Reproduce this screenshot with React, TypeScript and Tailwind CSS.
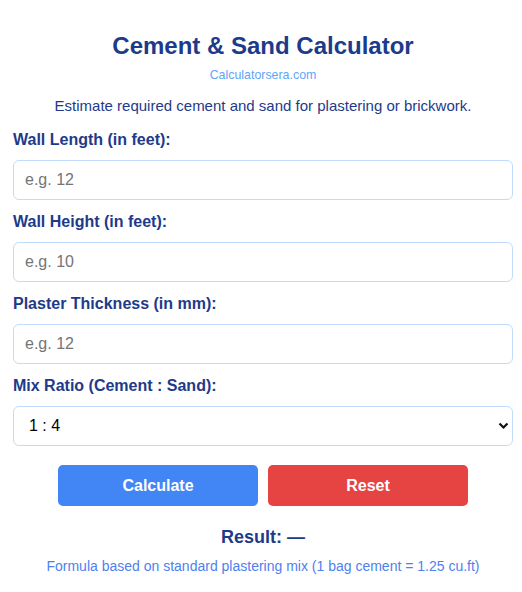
import { useState } from 'react';

const fields = [
  { label: 'Wall Length (in feet):', placeholder: 'e.g. 12' },
  { label: 'Wall Height (in feet):', placeholder: 'e.g. 10' },
  { label: 'Plaster Thickness (in mm):', placeholder: 'e.g. 12' },
];

export default function App() {
  const [values, setValues] = useState(['', '', '']);
  const [ratio, setRatio] = useState('4');

  return (
    <div className="min-h-screen bg-white font-['Liberation_Sans',Arial,sans-serif]">
      <div className="pl-[13px] pr-[9px] pt-[32px]">
        {/* Header */}
        <h1 className="text-center text-[24px] leading-[28px] font-bold text-[#1e3a8a]">
          Cement &amp; Sand Calculator
        </h1>
        <p className="mt-[7px] text-center text-[12.4px] leading-[16px] text-[#60a5fa]">Calculatorsera.com</p>
        <p className="mt-[14px] text-center text-[15px] leading-[18px] text-[#1e3a8a]">
          Estimate required cement and sand for plastering or brickwork.
        </p>

        {/* Inputs */}
        <div className="mt-[15px] flex flex-col gap-[12px]">
          {fields.map((f, i) => (
            <div key={f.label}>
              <label className="block text-[16px] leading-[20px] font-bold text-[#1e3a8a]">{f.label}</label>
              <input
                type="number"
                placeholder={f.placeholder}
                value={values[i]}
                onChange={(e) => {
                  const next = [...values];
                  next[i] = e.target.value;
                  setValues(next);
                }}
                className="mt-[10px] block h-[40px] w-full rounded-[6px] border border-[#bfdbfe] px-[11px] text-[16px] text-black placeholder:text-[#757575] outline-none"
              />
            </div>
          ))}
          <div>
            <label className="block text-[16px] leading-[20px] font-bold text-[#1e3a8a]">Mix Ratio (Cement : Sand):</label>
            <div className="relative mt-[10px]">
              <select
                value={ratio}
                onChange={(e) => setRatio(e.target.value)}
                className="block h-[40px] w-full appearance-none rounded-[6px] border border-[#bfdbfe] bg-white px-[15px] text-[16px] text-black outline-none"
              >
                <option value="3">1 : 3</option>
                <option value="4">1 : 4</option>
                <option value="5">1 : 5</option>
                <option value="6">1 : 6</option>
              </select>
              <svg
                className="pointer-events-none absolute right-[4px] top-[16px]"
                width="11"
                height="8"
                viewBox="0 0 11 8"
              >
                <path d="M1.5 1.5 L5.5 5.5 L9.5 1.5" fill="none" stroke="#111" strokeWidth="2.2" />
              </svg>
            </div>
          </div>
        </div>

        {/* Buttons */}
        <div className="mt-[19px] flex justify-center gap-[10px]">
          <button className="h-[41px] w-[200px] rounded-[5px] bg-[#4285f4] text-[16px] font-bold text-white">
            Calculate
          </button>
          <button className="h-[41px] w-[200px] rounded-[5px] bg-[#e64343] text-[16px] font-bold text-white">
            Reset
          </button>
        </div>

        {/* Result */}
        <p className="mt-[19px] text-center text-[18px] leading-[24px] font-bold text-[#1e3a8a]">Result: —</p>
        <p className="mt-[8px] text-center text-[14px] leading-[18px] text-[#4f80f0]">
          Formula based on standard plastering mix (1 bag cement = 1.25 cu.ft)
        </p>
      </div>
    </div>
  );
}
